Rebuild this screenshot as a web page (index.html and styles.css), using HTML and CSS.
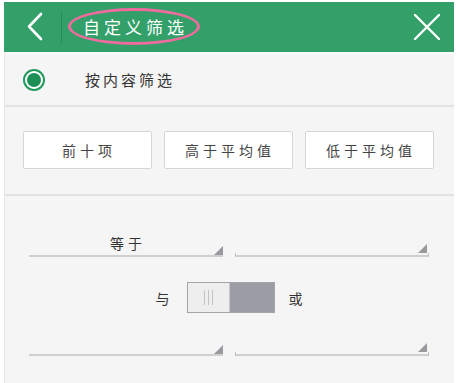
FILE: index.html
```html
<!DOCTYPE html>
<html>
<head>
<meta charset="utf-8">
<link rel="stylesheet" href="styles.css">
</head>
<body>
<div class="app">
  <header class="bar">
    <div class="back">
      <svg width="20" height="30" viewBox="0 0 20 30"><polyline points="15,2 3,14.5 15,27" fill="none" stroke="#fff" stroke-width="2.6" stroke-linecap="round" stroke-linejoin="round"/></svg>
    </div>
    <div class="divider"></div>
    <span class="title">自定义筛选</span>
    <div class="close">
      <svg width="28" height="28" viewBox="0 0 28 28"><path d="M2 2 L26 26 M26 2 L2 26" stroke="#fff" stroke-width="2.4" stroke-linecap="round"/></svg>
    </div>
  </header>
  <main class="content">
    <div class="radio-row">
      <span class="radio"><span class="dot"></span></span>
      <span class="radio-label">按内容筛选</span>
    </div>
    <div class="btn-row">
      <div class="btn">前十项</div>
      <div class="btn">高于平均值</div>
      <div class="btn">低于平均值</div>
    </div>
    <div class="cond">
      <div class="dd-row first">
        <div class="dd"><span class="dd-text">等于</span><span class="tri"></span></div>
        <div class="dd ticks"><span class="tri"></span></div>
      </div>
      <div class="toggle-row">
        <span class="tl">与</span>
        <div class="toggle">
          <div class="knob"><i></i><i></i><i></i></div>
          <div class="off"></div>
        </div>
        <span class="tr">或</span>
      </div>
      <div class="dd-row second">
        <div class="dd"><span class="tri"></span></div>
        <div class="dd ticks"><span class="tri"></span></div>
      </div>
    </div>
  </main>
</div>
</body>
</html>
```
FILE: styles.css
```css
* { box-sizing: border-box; }
html, body { margin: 0; padding: 0; background: #fff; }
body { font-family: "Noto Sans CJK SC", "Noto Sans", sans-serif; color: #333; }
.app { width: 457px; height: 383px; padding: 2px 3px 0 4px; display: flex; flex-direction: column; overflow: hidden; }

.bar { height: 50px; background: #33a06a; display: flex; align-items: center; flex-shrink: 0; }
.back { width: 57px; display: flex; justify-content: center; padding-left: 6px; }
.back svg { display: block; }
.divider { width: 1px; height: 31px; background: #2a8858; }
.title {
  margin-left: 6px; height: 37px; padding: 0 9px 0 12px;
  border: 3px solid #ee6c9d; border-radius: 50%;
  color: #fff; font-size: 17px; letter-spacing: 4px; line-height: 31px;
  margin-top: -2px;
}
.close { margin-left: auto; margin-right: 13px; display: flex; }
.close svg { display: block; }

.content { flex: 1; background: #f5f5f5; border-top: 2px solid #fbfbfb; border-left: 1px solid #e6e6e6; }

.radio-row { height: 53px; display: flex; align-items: center; border-bottom: 2px solid #e2e2e2; }
.radio { width: 22px; height: 22px; border: 2px solid #229a5c; border-radius: 50%; margin-left: 18px; display: flex; align-items: center; justify-content: center; background: #fff; }
.dot { width: 14px; height: 14px; border-radius: 50%; background: #1e8f55; }
.radio-label { margin-left: 40px; font-size: 15px; letter-spacing: 3px; }

.btn-row { display: flex; justify-content: center; gap: 12px; padding: 24px 3px 25px 0; border-bottom: 2px solid #e2e2e2; }
.btn { width: 129px; height: 38px; background: #fff; border: 1px solid #d6d6d6; border-radius: 2px; display: flex; align-items: center; justify-content: center; font-size: 14px; letter-spacing: 4px; padding-left: 4px; color: #444; }

.cond { display: flex; flex-direction: column; }
.dd-row { display: flex; justify-content: center; gap: 12px; padding-right: 1px; }
.dd-row.first { margin-top: 33px; }
.dd-row.second { margin-top: 15px; }
.dd { position: relative; width: 194px; height: 28px; border-bottom: 2px solid #cfcfd2; display: flex; align-items: flex-start; justify-content: center; }
.dd.ticks::before, .dd.ticks::after { content: ""; position: absolute; bottom: -2px; width: 1px; height: 4px; background: #c2c2c5; }
.dd.ticks::before { left: 0; }
.dd.ticks::after { right: 0; }
.dd-text { font-size: 14px; letter-spacing: 4px; line-height: 16px; margin-top: 6px; padding-left: 4px; }
.tri { position: absolute; right: 0; bottom: 0; width: 0; height: 0; border-left: 9px solid transparent; border-bottom: 9px solid #9a9a9e; }
.dd.ticks .tri { right: 2px; bottom: 2px; }

.toggle-row { display: flex; align-items: center; justify-content: center; margin-top: 25px; padding-right: 1px; }
.tl, .tr { font-size: 14px; }
.tl { margin-right: 17px; }
.tr { margin-left: 14px; }
.toggle { width: 88px; height: 31px; border: 1px solid #a3a5ab; display: flex; background: #9b9da5; }
.knob { width: 42px; background: #eeeeee; border-right: 1px solid #c8c8cc; display: flex; justify-content: center; align-items: center; gap: 3px; }
.knob i { display: block; width: 1px; height: 15px; background: #c4c4c8; }
.off { flex: 1; }
```
